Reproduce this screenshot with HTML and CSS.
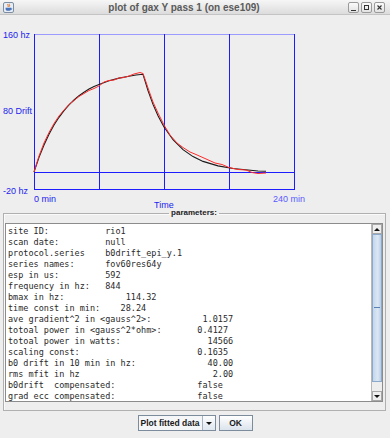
FILE: index.html
```
<!DOCTYPE html>
<html lang="en">
<head>
    <meta charset="UTF-8">
    <title>plot of gax Y pass 1 (on ese109)</title>
    <link rel="stylesheet" href="styles.css">
</head>
<body>
    <div class="window">
        <!-- title bar -->
        <div class="titlebar">
            <svg class="app-icon" width="11" height="11" viewBox="0 0 11 11">
                <rect x="0.5" y="0.5" width="10" height="10" rx="1.5" fill="#e6edf6" stroke="#7d8ea3"/>
                <path d="M5 2 C4 3 6 3.5 5 5 M6.5 1.8 C5.6 2.8 7.3 3.3 6.4 4.6" stroke="#e0701c" stroke-width="1" fill="none"/>
                <path d="M2.6 5.8 H8 V7.2 C8 8.4 6.8 8.8 5.3 8.8 C3.8 8.8 2.6 8.4 2.6 7.2 Z" fill="#4a72b8"/>
                <path d="M8 6.2 C9.2 6.2 9.2 7.6 8 7.6" stroke="#4a72b8" stroke-width="0.8" fill="none"/>
            </svg>
            <div class="title">plot of gax Y pass 1 (on ese109)</div>
            <div class="wbuttons">
                <span class="wbtn"><svg width="9" height="9" viewBox="0 0 9 9"><path d="M2 7.5 H7" stroke="#333" stroke-width="1"/></svg></span>
                <span class="wbtn"><svg width="9" height="9" viewBox="0 0 9 9"><rect x="2.5" y="2.5" width="4" height="4" stroke="#333" fill="none"/></svg></span>
                <span class="wbtn"><svg width="9" height="9" viewBox="0 0 9 9"><path d="M2.5 2.5 L6.5 6.5 M6.5 2.5 L2.5 6.5" stroke="#333" stroke-width="1.1"/></svg></span>
            </div>
        </div>

        <!-- drift plot -->
        <svg class="plot" width="390" height="193" viewBox="0 15 390 193">
            <line x1="34" y1="34.5" x2="294" y2="34.5" class="grid top"/>
            <line x1="34.5" y1="34" x2="34.5" y2="190" class="grid"/>
            <line x1="99.5" y1="34" x2="99.5" y2="190" class="grid"/>
            <line x1="164.5" y1="34" x2="164.5" y2="190" class="grid"/>
            <line x1="229.5" y1="34" x2="229.5" y2="190" class="grid"/>
            <line x1="294.5" y1="34" x2="294.5" y2="190" class="grid"/>
            <line x1="34" y1="172.5" x2="294" y2="172.5" class="grid"/>
            <line x1="34" y1="189.5" x2="294" y2="189.5" class="grid"/>

            <polyline class="fit" points="34,172 39,157.4 44,145 49,134.2 54,125 59,117.3 64,110.6 69,104.8 74,100 79,95.7 84,92.2 89,89.1 94,86.5 99,84.5 109,80.7 119,78.1 129,76.2 136,75 143,74.3 148,90.6 153,104.4 158,115.8 164,127 173,139.7 183,149.7 193,156.6 203,161.4 218,165.9 233,168.5 248,170 258,171 266,171.3"/>
            <polyline class="data" points="34,172 39,156 44,143 49,132.5 54,123.5 59,116 64,110 69,104.5 74,100.5 79,96.5 84,93.5 89,90.5 94,88.5 99,86 104,82 109,80.5 114,80 119,78 124,77.5 129,76 134,74 140,72.5 143,73.5 146,82 148,88 153,102 158,113 164,125 170,135 177,143 183,147.5 190,152 196,154.5 205,158.5 215,163 222,164.5 229,167.5 238,169.5 246,170 252,172.5 258,173.5 266,173"/>

            <text x="3" y="37.5">160 hz</text>
            <text x="3" y="113.5">80 Drift</text>
            <text x="3" y="193.5">-20 hz</text>
            <text x="34" y="201.5">0 min</text>
            <text x="154" y="207.5">Time</text>
            <text x="273" y="201.5" class="faint">240 min</text>
        </svg>

        <!-- parameter listing -->
        <fieldset class="group">
            <legend>parameters:</legend>
            <div class="textarea">
<pre class="params">site ID:           rio1
scan date:         null
protocol.series    b0drift_epi_y.1
series names:      fov60res64y
esp in us:         592
frequency in hz:   844
bmax in hz:            114.32
time const in min:    28.24
ave gradient^2 in &lt;gauss^2&gt;:          1.0157
totoal power in &lt;gauss^2*ohm&gt;:       0.4127
totoal power in watts:                 14566
scaling const:                       0.1635
b0 drift in 10 min in hz:              40.00
rms mfit in hz                          2.00
b0drift  compensated:                false
grad ecc compensated:                false</pre>
                <div class="scrollbar">
                    <div class="sb-btn"><span class="tri up"></span></div>
                    <div class="sb-thumb"><span class="grip"></span></div>
                    <div class="sb-track"></div>
                    <div class="sb-btn"><span class="tri down"></span></div>
                </div>
            </div>
        </fieldset>

        <div class="buttonbar">
            <div class="combo">
                <span class="combo-text">Plot fitted data</span>
                <span class="combo-arrow"><span class="tri down"></span></span>
            </div>
            <button class="okbtn">OK</button>
        </div>
    </div>
</body>
</html>
```

FILE: styles.css
```
body {
    margin: 0;
    padding: 0;
    background: #eeeeee;
    font-family: "Liberation Sans", Arial, sans-serif;
}
.window {
    width: 390px;
    height: 438px;
    background: #eeeeee;
    display: flex;
    flex-direction: column;
    overflow: hidden;
}
/* title bar */
.titlebar {
    height: 14px;
    border-bottom: 1px solid #c4c4c4;
    background: linear-gradient(#f6f6f6, #dcdcdc);
    display: flex;
    align-items: center;
    padding: 0 5px 0 3px;
}
.app-icon { display: block; }
.title {
    flex: 1;
    text-align: center;
    font-weight: bold;
    font-size: 10px;
    color: #5a5a5a;
    padding-left: 6px;
}
.wbuttons {
    display: flex;
    gap: 2px;
}
.wbtn {
    width: 9px;
    height: 9px;
    border: 1px solid #9a9a9a;
    border-radius: 2px;
    background: linear-gradient(#fbfbfb, #e2e2e2);
    display: flex;
}
.wbtn svg { display: block; }

/* plot */
.plot {
    display: block;
    flex: none;
    font-family: "Liberation Sans", Arial, sans-serif;
    font-size: 9px;
}
.plot .grid {
    stroke: #1c1cff;
    stroke-width: 1;
}
.plot .grid.top { stroke: #9a9aff; }
.plot text { fill: #2222ee; }
.plot text.faint { fill: #5a5aff; }
.plot .fit {
    fill: none;
    stroke: #1a1a1a;
    stroke-width: 1.1;
}
.plot .data {
    fill: none;
    stroke: #ff2a2a;
    stroke-width: 1;
}

/* parameters group */
.group {
    margin: 0 4px 0 3px;
    padding: 5px 2px 8px 1px;
    border: 1px solid #b0b0b0;
    box-shadow: inset 1px 1px 0 #fafafa;
    min-width: 0;
    flex: none;
}
.group legend {
    margin: 0 auto;
    padding: 0 2px;
    font-size: 8px;
    line-height: 10px;
    font-weight: bold;
    color: #222;
}
.textarea {
    height: 177px;
    border: 1px solid #8c8c8c;
    background: #ffffff;
    display: flex;
    overflow: hidden;
}
.params {
    flex: 1;
    margin: 0;
    padding: 2px 0 0 2px;
    font-family: "DejaVu Sans Mono", "Liberation Mono", monospace;
    font-size: 8.5px;
    line-height: 11px;
    color: #2a2a2a;
    overflow: hidden;
}
.scrollbar {
    width: 10px;
    display: flex;
    flex-direction: column;
    border-left: 1px solid #b8b8b8;
    background: #eeeeee;
}
.sb-btn {
    height: 10px;
    border: 1px solid #a8a8a8;
    background: #eeeeee;
    display: flex;
    align-items: center;
    justify-content: center;
    flex: none;
    box-sizing: border-box;
}
.sb-thumb {
    flex: 1;
    border: 1px solid #8da9c9;
    background: linear-gradient(90deg, #c3d6ec, #dbe7f4 60%, #b9cde4);
    display: flex;
    align-items: center;
    justify-content: center;
}
.grip {
    width: 6px;
    height: 1px;
    border-top: 1px solid #5a7fb3;
}
.sb-track {
    height: 9px;
    flex: none;
    background: #eeeeee;
}
.tri {
    width: 0;
    height: 0;
    border-left: 3px solid transparent;
    border-right: 3px solid transparent;
}
.tri.up { border-bottom: 3px solid #111; }
.tri.down { border-top: 3px solid #111; }

/* bottom buttons */
.buttonbar {
    flex: 1;
    display: flex;
    justify-content: center;
    align-items: flex-start;
    padding-top: 4px;
    gap: 3px;
}
.combo {
    width: 78px;
    height: 16px;
    box-sizing: border-box;
    border: 1px solid #7d8c9c;
    background: #f5f6f8;
    display: flex;
}
.combo-text {
    flex: 1;
    font-size: 8.5px;
    font-weight: bold;
    line-height: 14px;
    padding-left: 2px;
    color: #1a1a1a;
    white-space: nowrap;
}
.combo-arrow {
    width: 12px;
    border-left: 1px solid #a8b4c2;
    background: linear-gradient(#fdfdfd, #dfe6ee);
    display: flex;
    align-items: center;
    justify-content: center;
}
.okbtn {
    width: 34px;
    height: 16px;
    margin: 0;
    padding: 0;
    border: 1px solid #7d8c9c;
    background: linear-gradient(#ffffff, #dbe3ec);
    font-family: "Liberation Sans", Arial, sans-serif;
    font-size: 8.5px;
    font-weight: bold;
    color: #1a1a1a;
}
```
